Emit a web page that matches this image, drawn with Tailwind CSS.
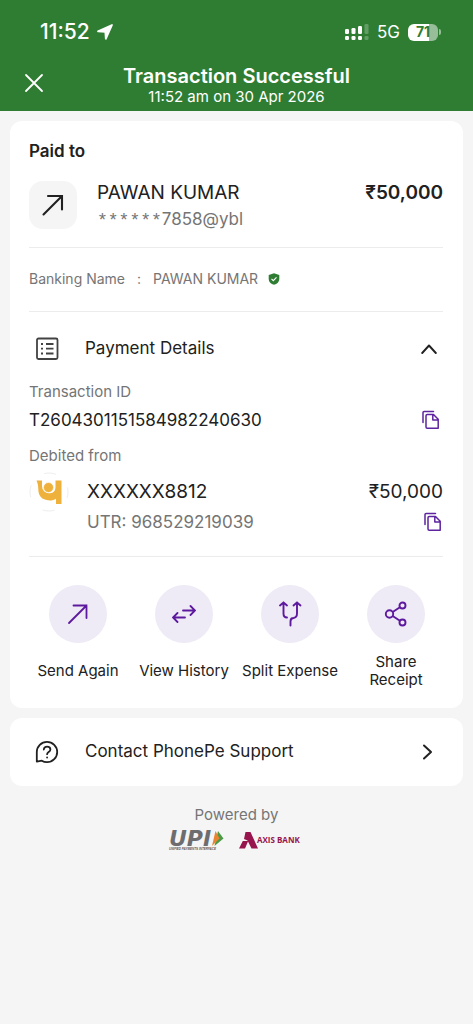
<!DOCTYPE html>
<html lang="en">
<head>
<meta charset="utf-8">
<meta name="viewport" content="width=device-width, initial-scale=1">
<title>Transaction Successful</title>
<script src="https://cdn.jsdelivr.net/npm/@tailwindcss/browser@4"></script>
</head>
<body class="min-h-screen bg-[#f5f5f5] font-['Inter',sans-serif] text-[#212121]">
<svg class="hidden" aria-hidden="true">
  <symbol id="copy" viewBox="0 0 20 20">
    <path d="M2 12.500V2.600Q2 1.500 3.100 1.500H12.500M6.200 4.500h6.300l4.700 4.700v9H6.200Q5 18.200 5 17V5.700Q5 4.500 6.200 4.500ZM11.800 4.500v5.400h5.400" fill="none" stroke="currentColor" stroke-width="1.500" stroke-linejoin="round" stroke-linecap="round"/>
  </symbol>
</svg>

<header class="bg-[#2e7d32] pt-5 text-white">
  <div class="flex h-6 items-center pr-8 pl-10">
    <span class="text-[21px] leading-6 font-medium">11:52</span>
    <svg class="ml-1.5 size-[18px]" viewBox="0 0 18 18" aria-hidden="true"><path d="M16 2 9.800 15.800 9.300 8.800 2 8.300Z" fill="currentColor" stroke="currentColor" stroke-width="1.800" stroke-linejoin="round"/></svg>
    <svg class="ml-auto h-5 w-6" viewBox="0 0 24 20" aria-hidden="true" fill="currentColor">
      <rect y="7" width="4" height="5" rx="1.300"/><rect x="6.500" y="6" width="4" height="6" rx="1.300"/><rect x="13" y="4" width="4" height="8" rx="1.300"/><rect x="19.500" y="2" width="4" height="10" rx="1.300" opacity=".25"/>
      <rect y="14" width="4" height="4" rx="1.300"/><rect x="6.500" y="14" width="4" height="4" rx="1.300"/><rect x="13" y="14" width="4" height="4" rx="1.300"/><rect x="19.500" y="14" width="4" height="4" rx="1.300" opacity=".25"/>
    </svg>
    <span class="ml-2 text-[17px] leading-6">5G</span>
    <div class="ml-2 flex items-center">
      <div class="flex h-[17px] w-[30px] items-center justify-center rounded-[6px] bg-linear-to-r from-white from-70% to-[#97be99] to-70% text-[14px] leading-4 font-bold text-[#2e7d32]"><span>71</span></div>
      <span class="ml-px h-1.5 w-0.5 rounded-r-sm bg-white/50"></span>
    </div>
  </div>
  <div class="grid h-[67px] grid-cols-[1fr_auto_1fr] pt-5">
    <button type="button" aria-label="Close" class="mt-[9px] ml-6 flex size-5 items-center self-start">
      <svg class="size-5" viewBox="0 0 20 20" aria-hidden="true"><path d="m2 2 16 16M18 2 2 18" stroke="currentColor" stroke-width="1.800" stroke-linecap="round"/></svg>
    </button>
    <div class="text-center">
      <h1 class="text-[20px] leading-6 font-semibold">Transaction Successful</h1>
      <p class="text-[15px] leading-[18px]">11:52 am on 30 Apr 2026</p>
    </div>
  </div>
</header>

<main class="px-2.5 pt-2.5">
  <section class="rounded-xl bg-white pt-5 pr-5 pl-[19px]">
    <h2 class="text-[17px] leading-5 font-semibold">Paid to</h2>
    <div class="mt-5 flex items-start pb-3.5">
      <div class="flex size-12 items-center justify-center rounded-[14px] bg-[#f5f5f5]">
        <svg class="size-6" viewBox="0 0 24 24" fill="none" stroke="currentColor" stroke-width="2.100" aria-hidden="true"><path d="M2.500 21.500 21 3M7 3h14v13.500" stroke-linecap="round"/></svg>
      </div>
      <div class="ml-5">
        <p class="text-[19px] leading-6">PAWAN KUMAR</p>
        <p class="mt-0.5 flex text-[17px] leading-6 text-[#757575]"><span class="pt-0.5 font-['Liberation_Mono',monospace] text-[18px]">******</span><span>7858@ybl</span></p>
      </div>
      <p class="ml-auto text-[19px] leading-6 font-semibold">₹50,000</p>
    </div>
    <div class="flex h-[65px] items-center border-y border-[#ececec] pb-0.5 text-[14px] text-[#757575]">
      <span>Banking Name</span><span class="mx-3">:</span><span>PAWAN KUMAR</span>
      <svg class="ml-2.5 size-3" viewBox="0 0 12 12" aria-label="Verified"><path d="M6 .3 11.300 2v4c0 3-2.200 4.800-5.300 5.800C2.900 10.800.7 9 .7 6V2Z" fill="#2e7d32"/><path d="m3.500 5.900 1.800 1.800 3.200-3.400" fill="none" stroke="#fff" stroke-width="1.100"/></svg>
    </div>
    <button type="button" aria-expanded="true" class="flex h-[74px] w-full items-center px-1.5 text-left">
      <svg class="size-6" viewBox="0 0 24 24" fill="none" stroke="#424242" stroke-width="1.800" aria-hidden="true"><rect x="2" y="1.500" width="20.500" height="20.500" rx="1.500"/><path d="M6 7h2M11 7h7.500M6 11.700h2M11 11.700h7.500M6 16.500h2M11 16.500h7.500"/></svg>
      <span class="ml-[26px] text-[17px]">Payment Details</span>
      <svg class="ml-auto size-4" viewBox="0 0 16 16" aria-hidden="true"><path d="m1.200 12 6.800-7.500 6.800 7.500" fill="none" stroke="currentColor" stroke-width="1.900" stroke-linecap="round" stroke-linejoin="round"/></svg>
    </button>
    <p class="-mt-1 text-[15px] leading-5 text-[#757575]">Transaction ID</p>
    <div class="mt-1.5 flex items-center justify-between">
      <p class="text-[17px] leading-6">T2604301151584982240630</p>
      <button type="button" aria-label="Copy transaction ID" class="mr-0.5 text-[#5e24a0]"><svg class="size-5"><use href="#copy"/></svg></button>
    </div>
    <p class="mt-3.5 text-[15px] leading-5 text-[#757575]">Debited from</p>
    <div class="flex items-start border-b border-[#ececec] pb-5">
      <svg class="mt-1.5 size-10" viewBox="0 0 40 40" aria-hidden="true">
        <circle cx="20" cy="20" r="19" fill="none" stroke="#eee" stroke-dasharray="12 18" stroke-dashoffset="6"/>
        <path d="M7.500 8.500H13v5.500a7 7 0 0 0 8 7.200 6 6 0 0 0 5.500-5.700v-7h6V32H27v-5.300c-2.500 1.800-6 2.300-9.500 1.400C11 26.500 9.300 22 9.300 17 9.300 13 8.500 11 7.500 8.500Z" fill="#eeb13b"/><circle cx="19.500" cy="15.500" r="5" fill="#eeb13b" stroke="#fff" stroke-width=".6"/>
      </svg>
      <div class="mt-3 ml-[18px] flex-1">
        <div class="flex justify-between text-[19px] leading-7"><span>XXXXXX8812</span><span>₹50,000</span></div>
        <div class="mt-0.5 flex items-center justify-between"><span class="text-[17px] leading-7 text-[#757575]">UTR: 968529219039</span>
          <button type="button" aria-label="Copy UTR" class="text-[#5e24a0]"><svg class="size-5"><use href="#copy"/></svg></button>
        </div>
      </div>
    </div>
    <div class="-mr-1.5 -ml-1 grid grid-cols-4 pt-7 pb-[19px] text-[15px] leading-[18px]">
      <button type="button" class="flex flex-col items-center">
        <span class="flex size-[58px] items-center justify-center rounded-full bg-[#eeeaf6] text-[#5e1a9e]"><svg class="size-6" viewBox="0 0 24 24" fill="none" stroke="currentColor" stroke-width="1.800" aria-hidden="true"><path d="M3 21 20.500 3.500M7.500 3.500h13v12.500" stroke-linecap="round"/></svg></span>
        <span class="mt-2.5 flex h-9 items-center whitespace-nowrap">Send Again</span>
      </button>
      <button type="button" class="flex flex-col items-center">
        <span class="flex size-[58px] items-center justify-center rounded-full bg-[#eeeaf6] text-[#5e1a9e]"><svg class="size-6" viewBox="0 0 24 24" fill="none" stroke="currentColor" stroke-width="1.800" stroke-linecap="round" aria-hidden="true"><path d="M11 8.500h12M18.500 4l4.500 4.500-4.500 4.500M13 15.500H1M5.500 11 1 15.500 5.500 20"/></svg></span>
        <span class="mt-2.5 flex h-9 items-center whitespace-nowrap">View History</span>
      </button>
      <button type="button" class="flex flex-col items-center">
        <span class="flex size-[58px] items-center justify-center rounded-full bg-[#eeeaf6] text-[#5e1a9e]"><svg class="size-6 overflow-visible" viewBox="0 0 24 24" fill="none" stroke="currentColor" stroke-width="1.900" stroke-linecap="round" aria-hidden="true"><path d="M2 3.500 5.500.5 9 3.500M5.500.5v11Q5.500 15.500 9 15.500M15.500 3.500 19 .5l3.500 3M19 .5v11q0 4-3.500 4.500-3 0-3 3.500V23.500"/></svg></span>
        <span class="mt-2.5 flex h-9 items-center whitespace-nowrap">Split Expense</span>
      </button>
      <button type="button" class="flex flex-col items-center">
        <span class="flex size-[58px] items-center justify-center rounded-full bg-[#eeeaf6] text-[#5e1a9e]"><svg class="size-6 overflow-visible" viewBox="0 0 24 24" fill="none" stroke="currentColor" stroke-width="1.900" aria-hidden="true"><circle cx="5.500" cy="12" r="3.700"/><circle cx="18.500" cy="3.500" r="3"/><circle cx="18.500" cy="20.500" r="3"/><path d="m8.700 10 7.200-4.800M8.700 14l7.200 4.800"/></svg></span>
        <span class="mt-2.5 flex h-9 items-center">Share<br>Receipt</span>
      </button>
    </div>
  </section>

  <a href="#support" class="mt-2.5 flex h-[68px] items-center rounded-xl bg-white pr-7 pl-[25px]">
    <svg class="size-6" viewBox="0 0 24 24" fill="none" stroke="currentColor" stroke-width="1.800" stroke-linecap="round" stroke-linejoin="round" aria-hidden="true"><path d="M1.800 21.600V12A10.200 10.200 0 1 1 12 22.200c-2 0-3.800-.6-5.200-1.500Z"/><path d="M8.800 9.500c.2-1.800 1.500-2.900 3.300-2.900s3.300 1.100 3.300 2.800c0 2.600-3.300 2.700-3.300 4.800M12.100 17.300v.2"/></svg>
    <span class="ml-[26px] text-[17px]">Contact PhonePe Support</span>
    <svg class="ml-auto size-4" viewBox="0 0 16 16" aria-hidden="true"><path d="M5 1.500 12 8l-7 6.500" fill="none" stroke="currentColor" stroke-width="2" stroke-linecap="round" stroke-linejoin="round"/></svg>
  </a>
</main>

<footer class="pt-[19px] text-center">
  <p class="text-[15px] leading-5 text-[#757575]">Powered by</p>
  <div class="mt-1 flex justify-center gap-3.5">
    <svg class="h-6 w-14 overflow-visible" viewBox="0 0 56 24" role="img" aria-label="UPI, Unified Payments Interface">
      <text x="0" y="17" font-family="DejaVu Sans" font-style="oblique" font-weight="700" font-size="22" fill="#6d6d70">UPI</text>
      <path d="m49 2 5.500 7.500L45.500 17Z" fill="#4b9b46"/><path d="m46.500 2 4 7.500-7.500 7.500Z" fill="#e98432"/>
      <text x="0" y="21" font-family="Liberation Sans" font-style="italic" font-weight="700" font-size="3" fill="#555">UNIFIED PAYMENTS INTERFACE</text>
    </svg>
    <svg class="h-6 w-[66px] overflow-visible" viewBox="0 0 66 24" role="img" aria-label="Axis Bank">
      <path d="M6.500 3h5L19 19.500h-6.500L8.500 11.500 5 10ZM3.800 12h5.400L6 19.500H0Z" fill="#97144d"/>
      <text x="18" y="14" font-family="Open Sans" font-weight="700" font-size="8" fill="#97144d">AXIS BANK</text>
    </svg>
  </div>
</footer>
</body>
</html>
